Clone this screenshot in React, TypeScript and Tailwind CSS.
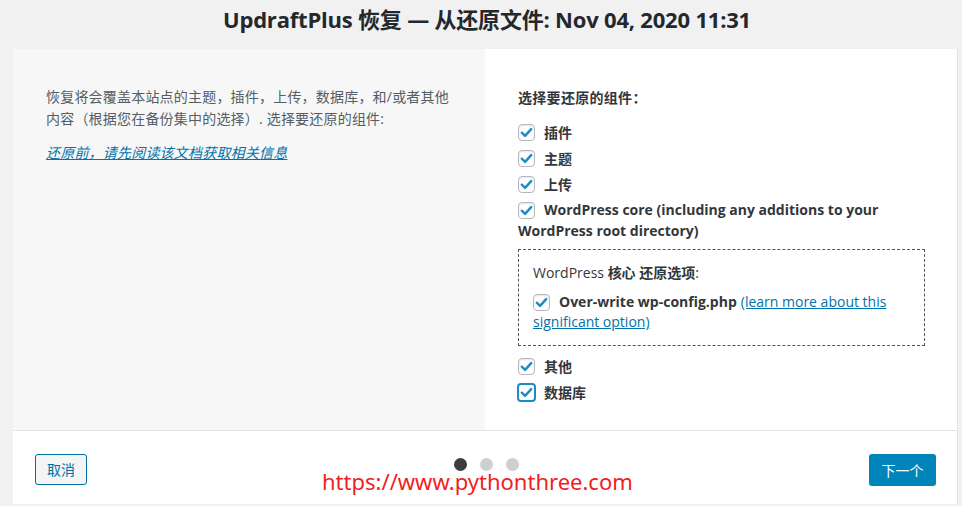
import React from "react";

const FONT = { fontFamily: '"Open Sans", "Noto Sans CJK SC", sans-serif' };

function Check({ focus = false }: { focus?: boolean }) {
  return (
    <span
      className={
        focus
          ? "inline-flex w-[19px] h-[19px] shrink-0 items-center justify-center rounded-[4px] border-2 border-[#1e8cbe] bg-white mr-[8px] -ml-[1px]"
          : "inline-flex w-[17px] h-[17px] shrink-0 items-center justify-center rounded-[4px] border border-[#b4b9be] bg-white mr-[9px] shadow-[inset_0_1px_2px_rgba(0,0,0,0.1)]"
      }
    >
      <svg viewBox="0 0 16 16" className="w-[15px] h-[15px]">
        <path d="M3 8.2 L6.5 11.6 L13 4.4" fill="none" stroke="#1e8cbe" strokeWidth="2.6" strokeLinecap="round" strokeLinejoin="round" />
      </svg>
    </span>
  );
}

function Row({ label, focus }: { label: string; focus?: boolean }) {
  return (
    <div className="flex items-center h-[26px] text-[14px] font-bold text-[#32373c]">
      <Check focus={focus} />
      <span>{label}</span>
    </div>
  );
}

export default function App() {
  return (
    <div className="w-[962px] h-[506px] bg-[#f1f1f1] overflow-hidden" style={FONT}>
      <div className="h-[49px] flex justify-center pt-[3px] pl-[12px] text-[22px] font-bold text-[#23282d] tracking-[-0.2px]">
        UpdraftPlus 恢复 — 从还原文件: Nov 04, 2020 11:31
      </div>

      <div className="ml-[13px] w-[945px] h-[455px] bg-white flex flex-col border-r border-[#e2e2e2]">
        <div className="flex h-[381px]">
          <div className="w-[473px] bg-[#f7f7f7] pl-[33px] pr-[24px] pt-[37px] text-[14px] leading-[22px] text-[#555d66] tracking-[0.2px]">
            <p>恢复将会覆盖本站点的主题，插件，上传，数据库，和/或者其他内容（根据您在备份集中的选择）. 选择要还原的组件:</p>
            <p className="mt-[12px]">
              <a className="italic underline text-[#0073aa]" href="#">还原前，请先阅读该文档获取相关信息</a>
            </p>
          </div>

          <div className="flex-1 pl-[33px] pr-[32px] pt-[38px] text-[#32373c]">
            <div className="text-[14px] font-semibold leading-[22px] tracking-[0.3px]">选择要还原的组件：</div>
            <div className="mt-[10px]">
              <Row label="插件" />
              <Row label="主题" />
              <Row label="上传" />
              <div className="pt-[2px] text-[14px] font-bold leading-[21px]">
                <span className="inline-flex align-[-3px]"><Check /></span>
                WordPress core (including any additions to your
                <br />
                WordPress root directory)
              </div>
            </div>

            <div className="mt-[8px] w-[407px] h-[97px] border border-dashed border-[#555] px-[14px] pt-[12px] text-[14px] leading-[21px]">
              <div>WordPress <b>核心</b> <b>还原选项</b>:</div>
              <div className="mt-[9px] leading-[20px]">
                <span className="inline-flex align-[-3px]"><Check /></span>
                <b className="mr-[4px]">Over-write wp-config.php</b>
                <a className="underline text-[#0073aa]" href="#">(learn more about this</a>
                <br />
                <a className="underline text-[#0073aa]" href="#">significant option)</a>
              </div>
            </div>

            <div className="mt-[7px]">
              <Row label="其他" />
              <Row label="数据库" focus />
            </div>
          </div>
        </div>

        <div className="relative flex-1 border-t border-[#e5e5e5] flex items-start justify-between pt-[23px] pl-[22px] pr-[21px]">
          <button className="h-[31px] w-[52px] rounded-[3px] border border-[#0071a1] bg-[#f3f5f6] text-[14px] text-[#0071a1]">
            取消
          </button>
          <div className="absolute left-[441px] top-[27px] flex gap-[13px]">
            <span className="w-[13px] h-[13px] rounded-full bg-[#3c3c3c]" />
            <span className="w-[13px] h-[13px] rounded-full bg-[#cfcfcf]" />
            <span className="w-[13px] h-[13px] rounded-full bg-[#cfcfcf]" />
          </div>
          <button className="h-[32px] w-[67px] rounded-[3px] bg-[#0085ba] text-[14px] text-white">
            下一个
          </button>
          <div
            className="absolute left-[309px] top-[37px] text-[22px] leading-[26px] text-[#f01e1e]"
            style={{ fontFamily: '"Noto Sans", sans-serif' }}
          >
            https://www.pythonthree.com
          </div>
        </div>
      </div>
    </div>
  );
}
